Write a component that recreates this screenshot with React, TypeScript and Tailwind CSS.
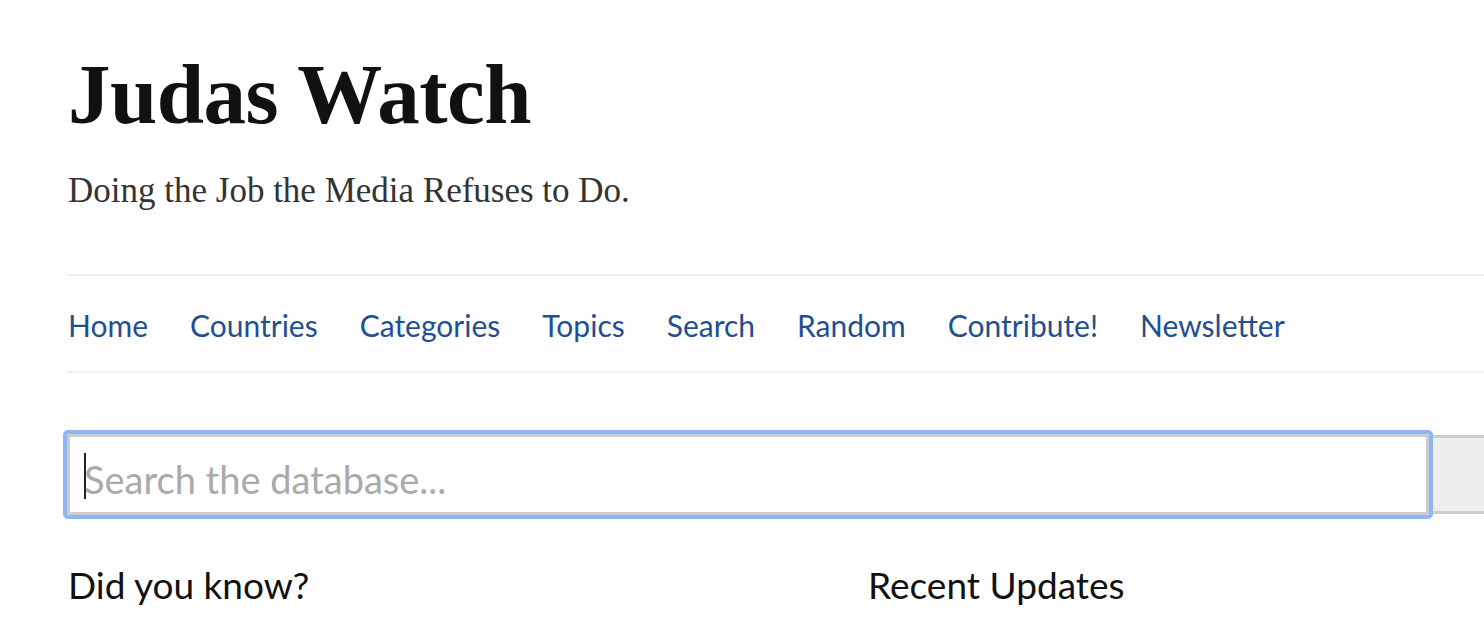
import React from 'react';

const links = ['Home', 'Countries', 'Categories', 'Topics', 'Search', 'Random', 'Contribute!', 'Newsletter'];

const App = () => {
  return (
    <div className="w-[1484px] h-[618px] overflow-hidden bg-white">
      <div className="w-[1600px] pl-[68px] pt-[44px]">
        <h1 className="font-['Liberation_Serif',serif] font-bold text-[85px] leading-[100px] text-[#111] tracking-[-0.5px]">
          Judas Watch
        </h1>
        <p className="mt-[25px] font-['Liberation_Serif',serif] text-[35px] leading-[44px] text-[#333]">
          Doing the Job the Media Refuses to Do.
        </p>

        <nav className="mt-[61px] -ml-px border-y-2 border-[#f0f0f0] h-[99px] flex items-center gap-[42px] pl-px font-['Lato',sans-serif] text-[30px] text-[#1f4f93]">
          {links.map((link) => (
            <a key={link} href="#" className="leading-none pt-[2px]">
              {link}
            </a>
          ))}
        </nav>

        <div className="mt-[57px] -ml-[5px] flex items-start">
          <div className="relative shrink-0 w-[1370px] h-[89px] p-[4px] rounded-[5px] bg-[#8fb4f2]">
            <input
              type="text"
              placeholder="Search the database..."
              className="w-full h-full bg-white border-[3px] border-[#ccc] pl-[14px] pt-[8px] font-['Lato',sans-serif] text-[38px] text-[#222] placeholder:text-[#aaa] outline-none"
            />
            <span className="absolute left-[21px] top-[23px] w-[2px] h-[46px] bg-[#222]" />
          </div>
          <button className="shrink-0 mt-[5px] -ml-[4px] w-[200px] h-[79px] bg-[#eee] border-y-[3px] border-[#ccc]" />
        </div>

        <div className="mt-[44px] grid grid-cols-2 w-[1600px] font-['Lato',sans-serif] text-[#111]">
          <h2 className="text-[37px] leading-[44px]">Did you know?</h2>
          <h2 className="text-[37px] leading-[44px]">Recent Updates</h2>
        </div>
      </div>
    </div>
  );
};

export default App;
